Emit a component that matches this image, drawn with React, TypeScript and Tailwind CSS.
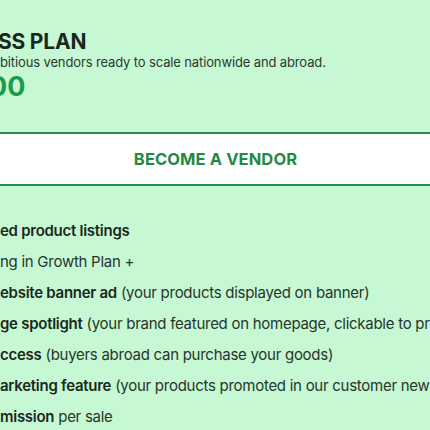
const features: { bold: string; rest: string }[] = [
  { bold: 'ed product listings', rest: '' },
  { bold: '', rest: 'ng in Growth Plan +' },
  { bold: 'ebsite banner ad', rest: ' (your products displayed on banner)' },
  { bold: 'ge spotlight', rest: ' (your brand featured on homepage, clickable to profile)' },
  { bold: 'ccess', rest: ' (buyers abroad can purchase your goods)' },
  { bold: 'arketing feature', rest: ' (your products promoted in our customer newsletter)' },
  { bold: 'mission', rest: ' per sale' },
];

export default function App() {
  return (
    <div
      className="w-[430px] h-[430px] overflow-hidden bg-[#c6f8d3] text-[#1b2820]"
      style={{ fontFamily: 'Inter, "Noto Sans", sans-serif' }}
    >
      {/* Plan header */}
      <div className="pt-[30px]">
        <h2 className="text-[21px] leading-[24px] font-bold tracking-[-0.2px] -ml-[2px]">SS PLAN</h2>
        <p className="text-[13px] leading-[16px] tracking-[-0.13px] text-[#2a3a30]">
          bitious vendors ready to scale nationwide and abroad.
        </p>
        <p className="text-[27px] leading-[30px] font-bold text-[#1a9b4b] mt-[2px] -ml-[11px]">00</p>
      </div>

      {/* CTA */}
      <div className="-mx-4 mt-[30px] h-[54px] border-[2.5px] border-[#23914a] bg-white flex items-center justify-center">
        <span className="text-[16.5px] font-bold tracking-[0.1px] text-[#1f8a45] pl-[1px]">BECOME A VENDOR</span>
      </div>

      {/* Features */}
      <ul className="mt-[35px] flex flex-col gap-[11px] text-[15px] leading-[20px] tracking-[-0.27px] whitespace-nowrap">
        {features.map((f, i) => (
          <li key={i}>
            {f.bold && <span className="font-semibold">{f.bold}</span>}
            <span className="text-[#26352c]">{f.rest}</span>
          </li>
        ))}
      </ul>
    </div>
  );
}
